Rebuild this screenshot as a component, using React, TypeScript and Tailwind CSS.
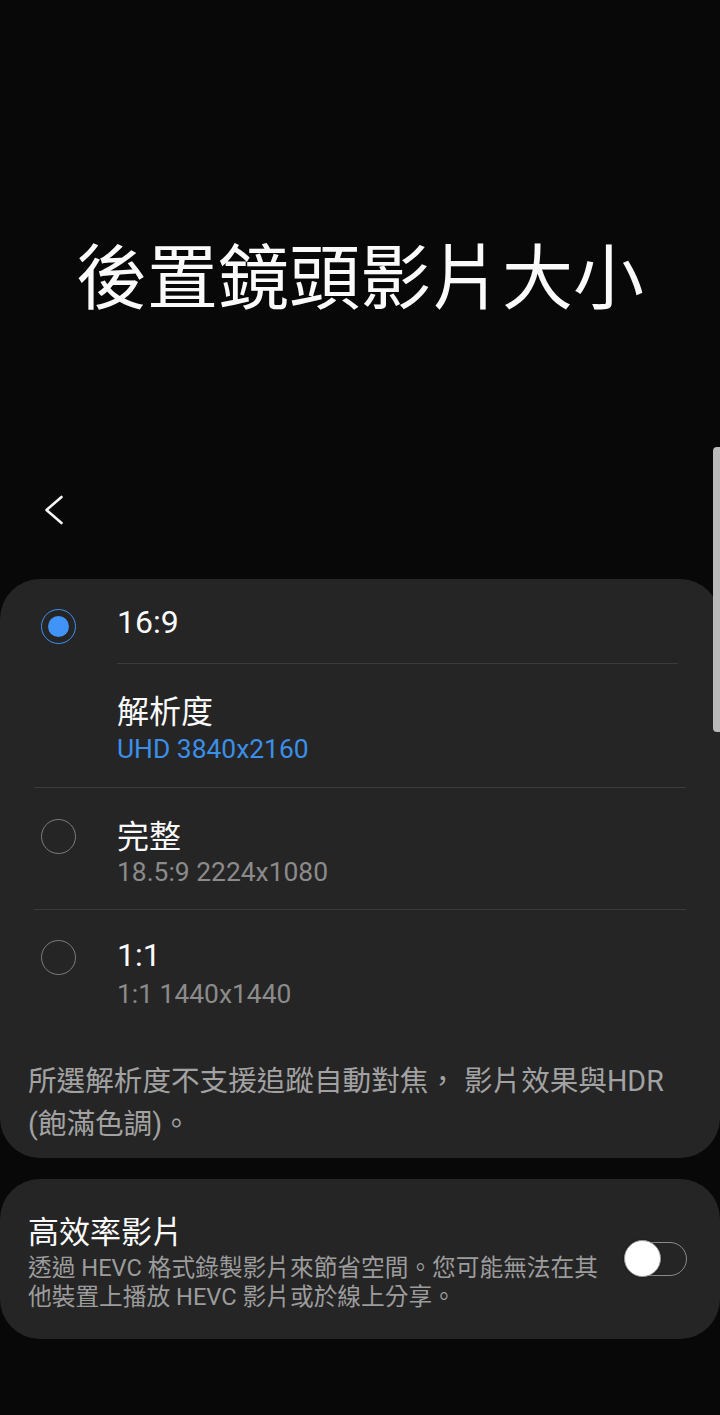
import React from "react";

const FONT = { fontFamily: "Roboto, 'Noto Sans CJK TC', sans-serif" };
const CJK = { fontFamily: "'Noto Sans CJK TC', Roboto, sans-serif" };

function Radio({ checked }: { checked?: boolean }) {
  if (checked) {
    return (
      <div className="w-[35px] h-[35px] rounded-full border-[1.5px] border-[#3f8ff5] flex items-center justify-center">
        <div className="w-[21px] h-[21px] rounded-full bg-[#4193f8]" />
      </div>
    );
  }
  return <div className="w-[35px] h-[35px] rounded-full border-[1.5px] border-[#7c7c7c]" />;
}

export default function App() {
  return (
    <div className="relative min-h-[1415px] w-[720px] bg-[#080808] text-[#fafafa] overflow-hidden" style={FONT}>
      {/* scrollbar */}
      <div className="absolute right-0 top-[447px] w-[7px] h-[285px] rounded-l-[4px] bg-[#bababa]" />

      {/* title */}
      <div className="pt-[237px] flex justify-center">
        <h1 className="text-[71px] leading-[70px] font-normal text-[#fafafa]" style={CJK}>
          後置鏡頭影片大小
        </h1>
      </div>

      {/* back */}
      <div className="mt-[188px] pl-[40px] h-[30px]">
        <svg width="30" height="30" viewBox="0 0 30 30" fill="none">
          <path d="M21.5 2 L6.5 15 L21.5 28" stroke="#f5f5f5" strokeWidth="2.6" strokeLinecap="round" strokeLinejoin="round" />
        </svg>
      </div>

      {/* card 1 */}
      <div className="mt-[54px] rounded-[40px] bg-[#252525]">
        {/* row 16:9 */}
        <div className="flex h-[85px]">
          <div className="w-[117px] pl-[41px] flex items-center pt-[10px]">
            <Radio checked />
          </div>
          <div className="flex-1 mr-[42px] border-b border-[#3b3b3b] flex items-center pt-[2px]">
            <span className="text-[32px] leading-[40px]">16:9</span>
          </div>
        </div>

        {/* resolution */}
        <div className="h-[123px] pt-[25px]">
          <div className="pl-[117px]">
            <div className="text-[32px] leading-[40px]" style={CJK}>解析度</div>
            <div className="text-[26.4px] leading-[36px] mt-[2px] text-[#3b8fe8]">UHD 3840x2160</div>
          </div>
        </div>
        <div className="mx-[34px] border-b border-[#3b3b3b]" />

        {/* row full */}
        <div className="flex h-[121px] pt-[26px]">
          <div className="w-[117px] pl-[41px] h-[40px] flex items-center mt-[2px]">
            <Radio />
          </div>
          <div>
            <div className="text-[32px] leading-[40px]" style={CJK}>完整</div>
            <div className="text-[26.4px] leading-[36px] text-[#8b8b8b]">18.5:9 2224x1080</div>
          </div>
        </div>
        <div className="mx-[34px] border-b border-[#3b3b3b]" />

        {/* row 1:1 */}
        <div className="flex pt-[25px]">
          <div className="w-[117px] pl-[41px] h-[40px] flex items-center mt-[2px]">
            <Radio />
          </div>
          <div>
            <div className="text-[32px] leading-[40px]">1:1</div>
            <div className="text-[26.4px] leading-[36px] text-[#8b8b8b] mt-[1px]">1:1 1440x1440</div>
          </div>
        </div>

        {/* footer note */}
        <div className="px-[28px] pt-[48px] pb-[12px] text-[28.6px] leading-[43px] text-[#a2a2a2] whitespace-nowrap">
          所選解析度不支援追蹤自動對焦， 影片效果與HDR
          <br />
          (飽滿色調)。
        </div>
      </div>

      {/* card 2 */}
      <div className="mt-[21px] rounded-[40px] bg-[#252525] flex items-center">
        <div className="flex-1 pl-[28px] pt-[31px] pb-[27px]">
          <div className="text-[31px] leading-[40px]" style={CJK}>高效率影片</div>
          <div className="text-[23.7px] leading-[29px] mt-[4px] text-[#9c9c9c] whitespace-nowrap">
            透過 HEVC 格式錄製影片來節省空間。您可能無法在其
            <br />
            他裝置上播放 HEVC 影片或於線上分享。
          </div>
        </div>
        <div className="mr-[33px]">
          <div className="relative w-[62px] h-[34px] rounded-full border-[1.5px] border-[#8a8a8a]">
            <div className="absolute left-[-2px] top-[-3px] w-[37px] h-[37px] rounded-full bg-white border border-[#9a9a9a] shadow-[0_0_2px_rgba(0,0,0,0.5)]" />
          </div>
        </div>
      </div>
    </div>
  );
}
